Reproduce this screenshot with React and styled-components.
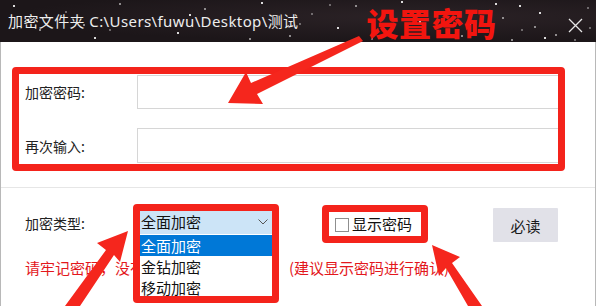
import React from "react";
import styled, { createGlobalStyle } from "styled-components";

const GlobalStyle = createGlobalStyle`
  html, body { margin: 0; padding: 0; background: #fff; }
  body { font-family: "Noto Sans CJK SC", "Noto Sans", sans-serif; }
  * { box-sizing: border-box; }
`;

const starList = [
  [14, 6], [40, 30], [66, 12], [95, 38], [120, 4], [150, 20], [178, 33], [205, 9],
  [232, 26], [262, 3], [290, 36], [312, 14], [338, 28], [356, 6], [372, 39], [402, 2],
  [425, 37], [448, 10], [470, 24], [503, 18], [522, 30], [540, 13], [556, 35], [588, 8],
  [520, 6], [535, 27], [575, 40], [28, 20], [84, 25], [300, 24], [420, 22], [462, 36],
  [110, 30], [190, 15], [250, 39], [330, 5], [545, 38], [512, 40], [590, 28], [496, 4],
];
const stars = starList
  .map(([x, y], i) => {
    const a = i % 3 === 0 ? 0.85 : i % 3 === 1 ? 0.5 : 0.35;
    return `radial-gradient(circle at ${x}px ${y}px, rgba(255,255,255,${a}) 0, rgba(255,255,255,${a}) 0.7px, transparent 1.3px)`;
  })
  .join(", ");

const Window = styled.div`
  position: relative;
  width: 596px;
  height: 306px;
  overflow: hidden;
  background: #fff;
`;

const TitleBar = styled.div`
  height: 42px;
  display: flex;
  align-items: center;
  padding-left: 8px;
  background-color: #1e181b;
  background-image: ${stars}, radial-gradient(ellipse at 70% 40%, #2b2226 0, #1c1619 70%);
`;

const Title = styled.span`
  font-family: "Noto Sans", "Noto Sans CJK SC", sans-serif;
  color: #ededed;
  font-size: 15px;
  line-height: 20px;
  letter-spacing: 0.4px;
  white-space: nowrap;
`;

const Headline = styled.span`
  align-self: flex-start;
  margin-left: 68px;
  margin-top: 4px;
  color: #f2150f;
  font-size: 32px;
  font-weight: 900;
  line-height: 36px;
  letter-spacing: 0.5px;
  white-space: nowrap;
`;

const CloseButton = styled.button`
  margin-left: auto;
  margin-right: 13px;
  width: 16px;
  height: 16px;
  padding: 0;
  border: 0;
  background: transparent;
  display: flex;
  align-items: center;
  justify-content: center;
  margin-top: 8px;
`;

const Body = styled.div`
  height: 264px;
  border-left: 1px solid #b8b8b8;
  border-right: 1px solid #b8b8b8;
`;

const TopSection = styled.div`
  padding: 25px 30px 16px 11px;
`;

const Frame = styled.div`
  border: 7px solid #f4231b;
  border-radius: 4px;
`;

const FormFrame = styled(Frame)`
  display: grid;
  grid-template-columns: 112px 1fr;
  grid-template-rows: 34px 35px;
  row-gap: 19px;
  padding: 1px 0 1px 6px;
  align-items: center;
`;

const Label = styled.label`
  font-size: 14px;
  color: #222;
  line-height: 20px;
  white-space: nowrap;
  margin-top: ${(p) => p.$dy || 0}px;
`;

const TextInput = styled.input`
  height: 100%;
  width: 100%;
  border: 1px solid #d6d6d6;
  border-right: 0;
  background: #fff;
  outline: none;
`;

const Divider = styled.div`
  height: 1px;
  background: #e6e6e6;
`;

const BottomSection = styled.div`
  position: relative;
  padding: 16px 0 0 24px;
`;

const Row = styled.div`
  display: flex;
  align-items: flex-start;
`;

const TypeLabel = styled(Label)`
  width: 115px;
`;

const SelectAnchor = styled.div`
  position: relative;
  width: 133px;
  margin-top: 6px;
`;

const SelectBox = styled.div`
  height: 24px;
  background: #cce4f7;
  display: flex;
  align-items: center;
  justify-content: space-between;
  padding: 0 5px 0 1px;
  font-size: 15px;
  color: #111;
  line-height: 20px;
`;

const DropList = styled.ul`
  position: absolute;
  top: calc(100% + 1px);
  left: 0;
  right: 0;
  margin: 0;
  padding: 0;
  list-style: none;
  background: #fff;
  z-index: 3;
`;

const DropItem = styled.li`
  height: 21px;
  line-height: 21px;
  padding-left: 1px;
  font-size: 15px;
  color: ${(p) => (p.$active ? "#fff" : "#111")};
  background: ${(p) => (p.$active ? "#0078d7" : "#fff")};
`;

const SelectFrame = styled(Frame)`
  position: absolute;
  top: -6px;
  left: -7px;
  right: -6px;
  height: 99px;
  z-index: 4;
  pointer-events: none;
`;

const CheckFrame = styled(Frame)`
  margin-left: 49px;
  margin-top: 1px;
  width: 106px;
  height: 38px;
  display: flex;
  align-items: center;
  padding-left: 6px;
  gap: 3px;
`;

const CheckSquare = styled.span`
  width: 14px;
  height: 14px;
  border: 1px solid #8f8f8f;
  background: #fff;
  margin-top: 2px;
`;

const CheckText = styled.span`
  font-size: 15px;
  color: #111;
  line-height: 20px;
  white-space: nowrap;
`;

const ReadButton = styled.button`
  margin-left: 65px;
  margin-top: 4px;
  width: 65px;
  height: 34px;
  border: 0;
  border-radius: 1px;
  background: #e1e1e8;
  font-family: inherit;
  font-size: 15px;
  color: #1a1a1a;
  padding: 0;
`;

const Warning = styled.div`
  display: flex;
  margin-top: 15px;
  color: #e3171c;
  font-size: 15px;
  line-height: 20px;
  white-space: nowrap;
`;

const WarningMain = styled.span`
  width: 264px;
`;

const Annotations = styled.svg`
  position: absolute;
  left: 0;
  top: 0;
  pointer-events: none;
  z-index: 10;
`;

export default function App() {
  return (
    <>
      <GlobalStyle />
      <Window>
        <TitleBar>
          <Title>加密文件夹 C:\Users\fuwu\Desktop\测试</Title>
          <Headline>设置密码</Headline>
          <CloseButton aria-label="关闭">
            <svg width="15" height="15" viewBox="0 0 15 15">
              <path d="M1 1 L14 14 M14 1 L1 14" stroke="#e6e6e6" strokeWidth="1.3" />
            </svg>
          </CloseButton>
        </TitleBar>
        <Body>
          <TopSection>
            <FormFrame>
              <Label>加密密码:</Label>
              <TextInput type="password" />
              <Label>再次输入:</Label>
              <TextInput type="password" />
            </FormFrame>
          </TopSection>
          <Divider />
          <BottomSection>
            <Row>
              <TypeLabel $dy={9}>加密类型:</TypeLabel>
              <SelectAnchor>
                <SelectBox>
                  <span>全面加密</span>
                  <svg width="10" height="6" viewBox="0 0 10 6">
                    <path d="M0.5 0.5 L5 5 L9.5 0.5" fill="none" stroke="#555" strokeWidth="1" />
                  </svg>
                </SelectBox>
                <DropList>
                  <DropItem $active>全面加密</DropItem>
                  <DropItem>金钻加密</DropItem>
                  <DropItem>移动加密</DropItem>
                </DropList>
                <SelectFrame />
              </SelectAnchor>
              <CheckFrame>
                <CheckSquare />
                <CheckText>显示密码</CheckText>
              </CheckFrame>
              <ReadButton>必读</ReadButton>
            </Row>
            <Warning>
              <WarningMain>请牢记密码，没有密码将无法解密</WarningMain>
              <span>(建议显示密码进行确认)</span>
            </Warning>
          </BottomSection>
        </Body>
        <Annotations width="596" height="306" viewBox="0 0 596 306">
          <g fill="#f5261d">
            <path d="M228 103 L246 72 L251 83 L359 36 L363 41 L257 94 L263 104 Z" />
            <path d="M128 231 L97 243 L106 250 L65 306 L80 306 L114 255 L120 262 Z" />
            <path d="M432 245 L460 257 L452 263 L482 306 L468 306 L446 268 L439 276 Z" />
          </g>
        </Annotations>
      </Window>
    </>
  );
}
